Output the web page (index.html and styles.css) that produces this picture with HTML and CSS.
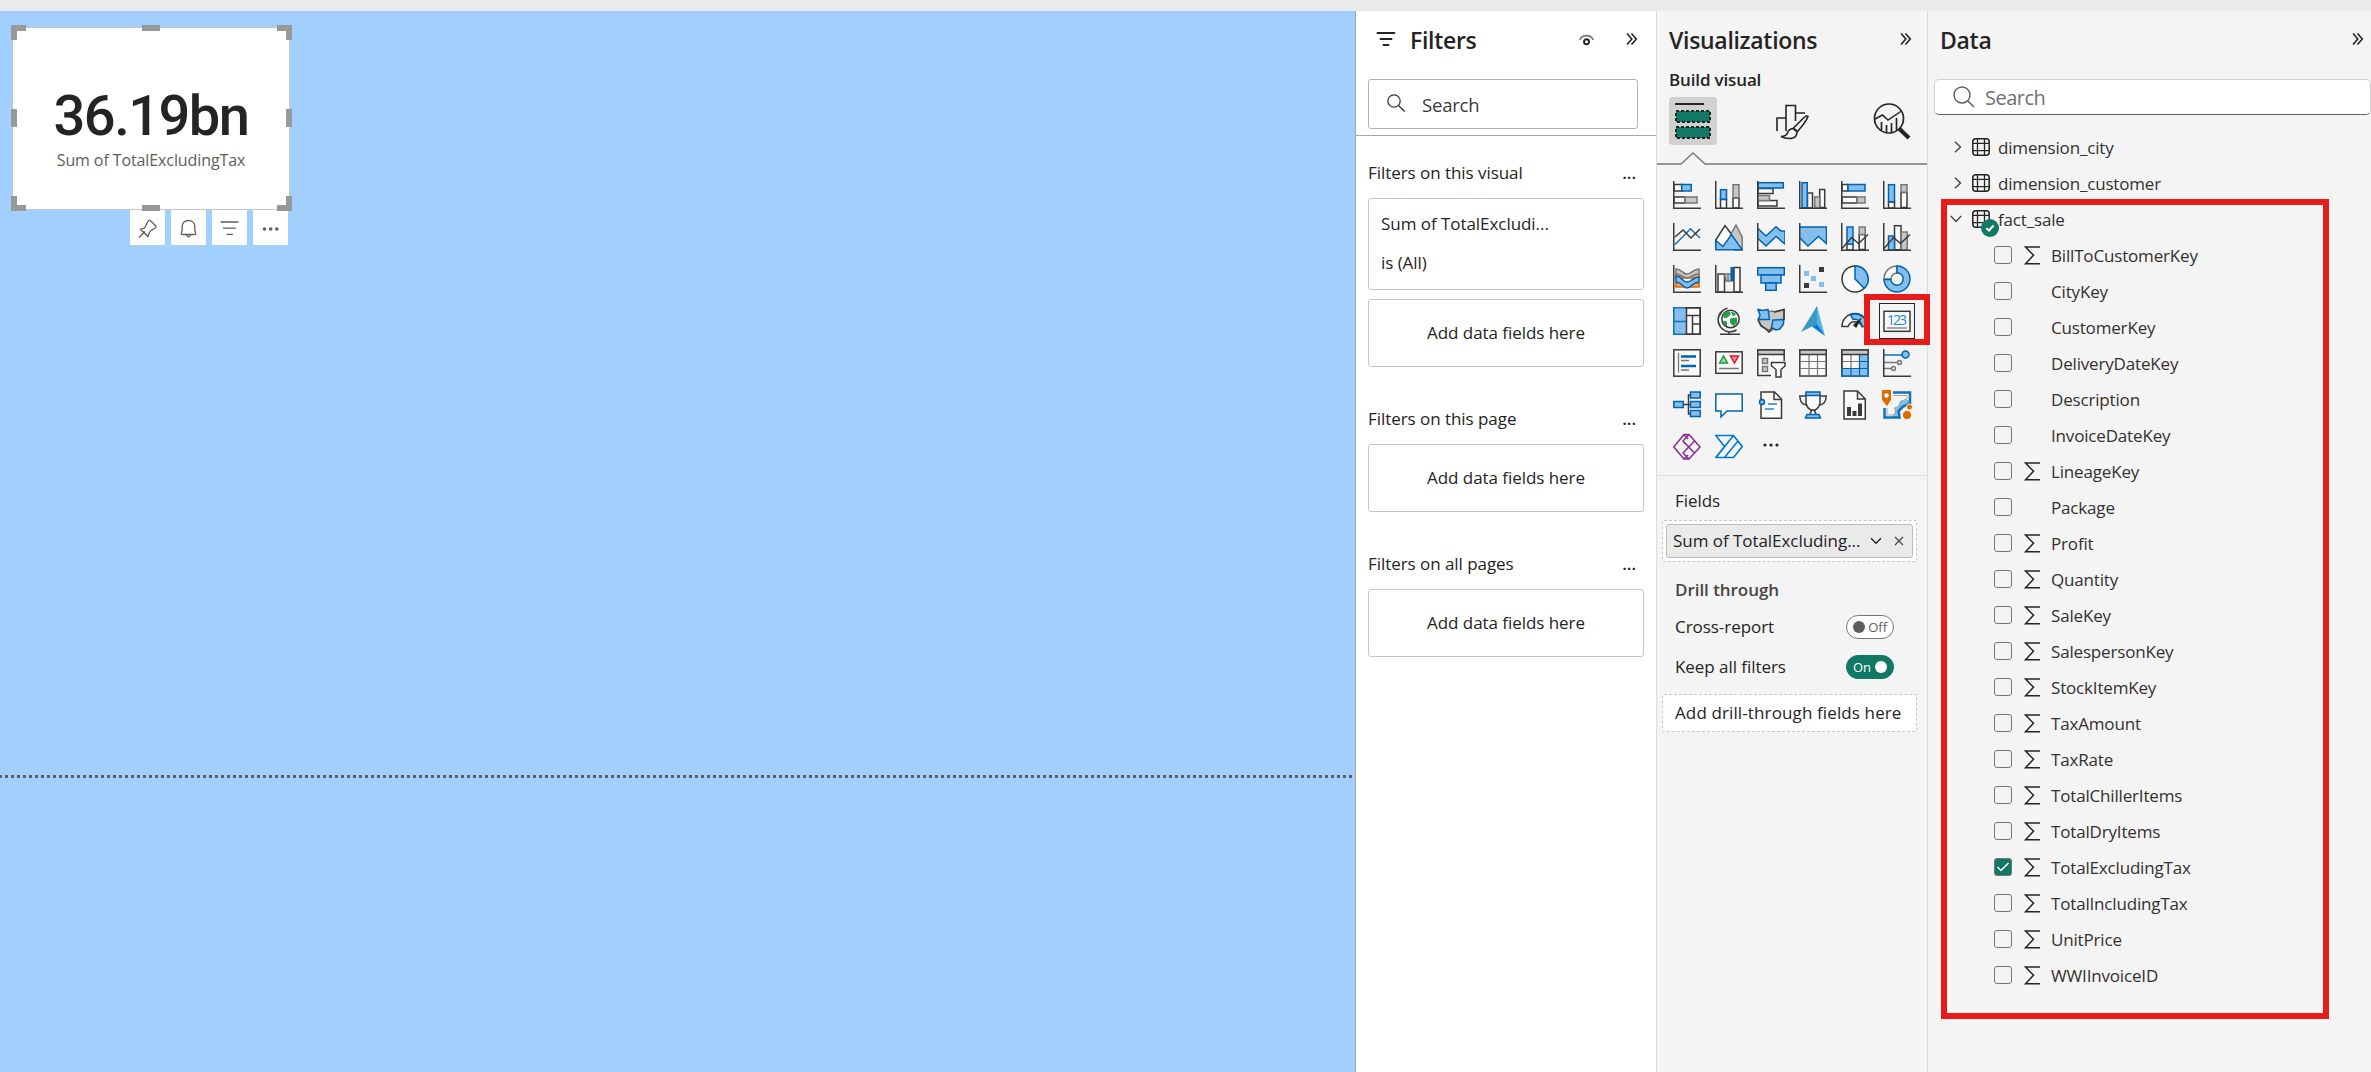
FILE: index.html
```html
<!DOCTYPE html>
<html lang="en">
<head>
<meta charset="utf-8">
<title>Report editor</title>
<link rel="stylesheet" href="styles.css">
</head>
<body>
<svg width="0" height="0" class="defs">
  <symbol id="sigma" viewBox="0 0 17 19"><path d="M16 1H1.5L9.5 9.2 1.5 17.8H16" fill="none" stroke="#252423" stroke-width="1.5"/></symbol>
  <symbol id="table" viewBox="0 0 18 18"><rect x=".8" y=".8" width="16.4" height="16.4" rx="3" fill="none" stroke="#252423" stroke-width="1.5"/><path d="M.8 5.3h16.4M.8 12.6h16.4M5.5.8v16.4M12.5.8v16.4" fill="none" stroke="#252423" stroke-width="1.3"/></symbol>
  <symbol id="chevrons" viewBox="0 0 12 14"><path d="M1 1.5 5.8 7 1 12.500M5.500 1.500 10.300 7 5.500 12.500" fill="none" stroke="#252423" stroke-width="1.6"/></symbol>
  <symbol id="axis" viewBox="0 0 28 28"><path d="M.75 0V27.200H28" fill="none" stroke="#3b3a39" stroke-width="1.500"/></symbol>
</svg>
<div class="topbar"></div>
<div class="app">
  <main class="canvas">
    <section class="card">
      <svg class="handles" width="281" height="186" viewBox="0 0 281 186">
        <path d="M0 0H15V6H6V15H0ZM281 0H266V6H275V15H281ZM0 186H15V180H6V171H0ZM281 186H266V180H275V171H281ZM131 0h18v6h-18ZM131 180h18v6h-18ZM0 84h6v18H0ZM275 84h6v18h-6Z"/>
      </svg>
      <div class="card-value">36.19bn</div>
      <div class="card-label">Sum of TotalExcludingTax</div>
    </section>
    <div class="card-tools">
      <span><svg width="35" height="35" viewBox="0 0 35 35"><path d="M9 27.500 15 21.500M18.500 10.500 14.500 18 10.500 19.300 18 26.500 19.500 22.500Q20.500 20 23 19.500L25.500 17.700Q26.500 16.700 25.500 15.700L20.500 10.700Q19.500 9.800 18.500 10.500Z"/></svg></span>
      <span><svg width="35" height="35" viewBox="0 0 35 35"><path d="M10.500 22.500Q9.500 24.500 11.500 24.500H23.500Q25.500 24.500 24.500 22.500L23.800 20.500V16.500C23.800 8.500 11.200 8.500 11.200 16.500V20.500ZM15 24.500Q17.500 29 20 24.500"/></svg></span>
      <span><svg width="35" height="35" viewBox="0 0 35 35"><path d="M9 12H26M11.500 18.200H23.500M15 24.300H20.500" stroke-linecap="round"/></svg></span>
      <span><svg width="35" height="35" viewBox="0 0 35 35"><g fill="#605e5c" stroke="none"><circle cx="11.500" cy="19" r="1.800"/><circle cx="17.700" cy="19" r="1.800"/><circle cx="23.800" cy="19" r="1.800"/></g></svg></span>
    </div>
    <div class="page-break"></div>
  </main>

  <aside class="filters">
    <header class="filters-head">
      <svg width="20" height="16" viewBox="0 0 20 16"><path d="M1.500 2H18.300M4.500 8H15.500M7.500 14H12.500" stroke="#252423" stroke-width="2" stroke-linecap="round"/></svg>
      <h2>Filters</h2>
      <svg class="eye" width="15" height="12" viewBox="0 0 15 12"><path d="M.8 6C3 .2 12 .2 14.200 6" fill="none" stroke="#797775" stroke-width="1.600"/><circle cx="7.500" cy="7.700" r="2.500" fill="none" stroke="#252423" stroke-width="1.900"/></svg>
      <svg width="12" height="14"><use href="#chevrons"/></svg>
    </header>
    <div class="filters-search">
      <svg width="20" height="20" viewBox="0 0 20 20"><circle cx="8" cy="8" r="6.200" fill="none" stroke="#3b3a39" stroke-width="1.300"/><path d="M12.500 12.500 18.700 18.500" stroke="#3b3a39" stroke-width="1.500"/></svg>
      <span>Search</span>
    </div>
    <section class="filter-group">
      <h3><span>Filters on this visual</span><b>...</b></h3>
      <div class="filter-item"><span>Sum of TotalExcludi...</span><span>is (All)</span></div>
      <div class="drop">Add data fields here</div>
    </section>
    <section class="filter-group">
      <h3><span>Filters on this page</span><b>...</b></h3>
      <div class="drop">Add data fields here</div>
    </section>
    <section class="filter-group">
      <h3><span>Filters on all pages</span><b>...</b></h3>
      <div class="drop">Add data fields here</div>
    </section>
  </aside>

  <aside class="viz">
    <header class="pane-head"><h2 class="viz-title">Visualizations</h2><svg width="12" height="14"><use href="#chevrons"/></svg></header>
    <div class="build">Build visual</div>
    <div class="tabs">
      <span class="tab tab-on"><svg width="48" height="48" viewBox="0 0 48 48"><path d="M6 7H35" stroke="#252423" stroke-width="2"/><g fill="#117865" stroke="#252423" stroke-width="2" stroke-dasharray="3 2"><rect x="7" y="14" width="34" height="11"/><rect x="7" y="30" width="34" height="11"/></g></svg></span>
      <span class="tab"><svg width="48" height="48" viewBox="0 0 48 48" fill="none" stroke="#252423" stroke-width="1.600"><path d="M12 34V21H21M21 34V8.500H30.500V24M30.500 16H40M21 21V28"/><path d="M43 19.500Q42 18 39 20.500L28 31.500Q31 32 32 35Q41 25 43 19.500ZM28 31.500Q23.500 32 22.500 36Q21 39.500 16 39.500Q22 42.500 28 41Q32 39.500 32 35Z" fill="#f4f4f4"/></svg></span>
      <span class="tab"><svg width="48" height="48" viewBox="0 0 48 48" fill="none" stroke="#252423"><circle cx="21" cy="21.500" r="14.500" stroke-width="1.700"/><path d="M7 22 14.500 18 20 23 33.500 14" stroke-width="1.500"/><path d="M13.500 33V25M18.500 36V28M23.500 36V26M28.500 33V21" stroke-width="1.700"/><path d="M31 31.500 41 41" stroke-width="4"/></svg></span>
    </div>
    <svg class="tab-line" width="270" height="14" viewBox="0 0 270 14"><path d="M0 12H24L36 1 48 12H270" fill="none" stroke="#797775" stroke-width="1.400"/></svg>

    <div class="visuals">
      <svg viewBox="0 0 28 28"><g class="w"><rect x="1" y="3.500" width="8" height="6.500"/><rect x="1" y="16" width="11" height="6"/></g><rect class="b" x="8.700" y="3.500" width="9.500" height="6.500"/><rect class="g" x="12" y="16" width="12" height="6"/><use href="#axis"/></svg>
      <svg viewBox="0 0 28 28"><g class="w"><rect x="5.500" y="18.500" width="6" height="9"/><rect x="18" y="17" width="6" height="10"/></g><rect class="b" x="5.500" y="8.700" width="6" height="9.500"/><rect class="g" x="18" y="3.700" width="6" height="13"/><use href="#axis"/></svg>
      <svg viewBox="0 0 28 28"><g class="w"><rect x="1" y="7.500" width="15" height="5"/><rect x="1" y="19.500" width="19" height="5.500"/></g><rect class="b" x="1" y="1.700" width="25.300" height="5.300"/><rect class="g" x="1" y="14.500" width="11.500" height="5"/><use href="#axis"/></svg>
      <svg viewBox="0 0 28 28"><g class="w"><rect x="8.500" y="12" width="5" height="15"/><rect x="20.700" y="8.500" width="5" height="18"/></g><rect class="b" x="3" y="1.700" width="5.200" height="25"/><rect class="g" x="15.700" y="16" width="5" height="11"/><use href="#axis"/></svg>
      <svg viewBox="0 0 28 28"><g class="w"><rect x="1" y="3.500" width="6" height="6.500"/><rect x="1" y="16" width="15" height="6"/></g><rect class="b" x="7" y="3.500" width="17" height="6.500"/><rect class="g" x="16" y="16" width="8" height="6"/><use href="#axis"/></svg>
      <svg viewBox="0 0 28 28"><g class="w"><rect x="5.500" y="21" width="6" height="6"/><rect x="18" y="11.500" width="6" height="15"/></g><rect class="b" x="5.500" y="3.700" width="6" height="17"/><rect class="g" x="18" y="3.700" width="6" height="7.500"/><use href="#axis"/></svg>

      <svg viewBox="0 0 28 28"><path class="lb" d="M2 21.500 10 13.500 17.500 5.800 27 15"/><path class="ld" d="M2 14 10 7 18 15 27 6"/><use href="#axis"/></svg>
      <svg viewBox="0 0 28 28"><path class="w" d="M.8 17 10 2.500 17 12 14 24H.8Z"/><path class="g" d="M15.500 12 21 2 27.200 14V27H20Z"/><path class="b" d="M.8 17.500 8 23.500 16.500 11.500 27.200 26.800H.8Z"/></svg>
      <svg viewBox="0 0 28 28"><path class="b" d="M1 5.500 9 13 19 3.700 24 8H28V21L19 13.500 9 23 1 15.500"/><use href="#axis"/></svg>
      <svg viewBox="0 0 28 28"><path class="b" d="M1 4H27.500V20.500L19.500 13.500 9 23 1 15"/><use href="#axis"/></svg>
      <svg viewBox="0 0 28 28"><g class="w"><rect x="6" y="21" width="6" height="6"/><rect x="18.200" y="11.500" width="6" height="15"/></g><rect class="b" x="6" y="4" width="6" height="17"/><rect class="g" x="18.200" y="4" width="6" height="7.500"/><path class="ld" d="M1 25.500 10.500 14.500 17.500 20.500 27 11.500"/><use href="#axis"/></svg>
      <svg viewBox="0 0 28 28"><rect class="w" x="11.500" y="2.700" width="6.500" height="24"/><rect class="b" x="5.500" y="13" width="6" height="14"/><rect class="g" x="18.200" y="9" width="6" height="18"/><path class="ld" d="M1 25.500 10.500 14.500 17.500 20.500 27 11.500"/><use href="#axis"/></svg>

      <svg viewBox="0 0 28 28"><path d="M3 9H8L13 13 19 9H26V13H3ZM3 18H8L13 22 19 18H26V22H3Z" fill="#f2a65a" stroke="#dd6b00" stroke-width="1.600"/><path class="g" d="M3 4C9 4 9 9 14 9S20 4 26 4V9C20 9 18 13 14 13S8 9 3 9Z"/><path class="b" d="M3 11C9 11 9 17 14 17S20 12 26 12V17C20 17 18 23 14 23S9 17 3 17Z"/><use href="#axis"/></svg>
      <svg viewBox="0 0 28 28"><g class="w"><rect x="3" y="9" width="6.500" height="18"/><rect x="19" y="2.500" width="6" height="24.500"/></g><path class="g" d="M9.500 9H14V16H11Z"/><rect x="13" y="9" width="5" height="7" fill="#c8c6c4" stroke="#797775" stroke-width="1.300"/><rect x="15.500" y="2" width="3.500" height="14" fill="#0063b1"/><use href="#axis"/></svg>
      <svg viewBox="0 0 28 28"><g class="b"><rect x=".8" y="2.700" width="26.500" height="7.300"/><rect x="4" y="10" width="20" height="8"/><rect x="8.700" y="18" width="10.500" height="7.300"/></g></svg>
      <svg viewBox="0 0 28 28"><g fill="#83beec"><rect x="5" y="6" width="5" height="5"/><rect x="12" y="11" width="5" height="5"/><rect x="20" y="17" width="5" height="5"/></g><path d="M20 2h5v5h-5ZM5 18h5v5H5Z" fill="#3b3a39"/><use href="#axis"/></svg>
      <svg viewBox="0 0 28 28"><circle class="w" cx="14" cy="14" r="13"/><path class="b" d="M14 1A13 13 0 0 1 23.200 23.200L14 14Z"/></svg>
      <svg viewBox="0 0 28 28"><path class="g2 hollow" d="M14 1A13 13 0 0 0 1 14H8A6 6 0 0 1 14 8Z"/><path class="b" d="M14 1A13 13 0 1 1 1 14.500H7.800A6.200 6.200 0 1 0 14 7.800Z"/></svg>

      <svg viewBox="0 0 28 28"><rect class="w" x=".8" y=".8" width="26.400" height="26.400"/><rect x=".8" y=".8" width="12.500" height="26.400" fill="#83beec"/><path d="M13 .8H.8V27.200H13M.8 14.500H13" class="lb"/><path class="ld" d="M13.500 0V28M13.500 8.500H27M19.500 8.500V27M19.500 17H27M12 .8H27.200V27.200H12"/></svg>
      <svg viewBox="-1.500 0 28 28"><path class="ld" d="M5 4.500A12 12 0 0 0 20 23M11 1.200A10 10 0 0 0 3.500 8M12.500 24V27M3.500 27.200H23.500"/><circle cx="14" cy="12" r="8.700" fill="#fafafa" stroke="#3b3a39" stroke-width="1.500"/><path d="M8 6 12 4 14 7 11 10 8 11 7 8ZM15 5 19 7 17 9ZM14 12 20 11 20 16 17 18.500 14 16ZM7 14 10 15 10 19 8 17Z" fill="#259a47" stroke="#259a47"/></svg>
      <svg viewBox="0 0 28 28"><path class="g2" d="M11 5 15 4 18 5 27 2.500V13L25 16 18 21 14 24 9 22 4 18 1 12 10 12Z"/><path class="b" d="M1 2.500 6 3.500 11 2.500 12.500 12.500H1.500L3 8ZM16 13 26.500 12.500V17L23 22 19 23 14.500 20.500Z"/><path class="ld" d="M1 13 4 19 9 22 12 25 14.500 21M17 5 27 2.500V13"/></svg>
      <svg viewBox="0 0 28 28" class="over"><path d="M18-1 2 25 18 17Z" fill="#3999c6"/><path d="M18-1 26 29 18 18Z" fill="#59b4d9"/><path d="M13 19.500 18 17 26 29Z" fill="#0078d4"/></svg>
      <svg viewBox="0 0 28 28"><path class="w" d="M1 19.500A13 13 0 0 1 27 19.500H21A7.500 7.500 0 0 0 7 19.500Z"/><path class="b" d="M9.500 8A13 13 0 0 1 27 19.500H21A7.500 7.500 0 0 0 12 12.500Z"/><path d="M20 11.500 12.500 18 15 20.500Z" fill="#252423" stroke="#252423"/></svg>
      <span class="picked"><svg viewBox="0 0 28 28"><rect class="w" x="1" y="4.300" width="26" height="20" stroke-width="2"/><text x="14" y="18.300" text-anchor="middle" textLength="20" class="n123">123</text><path d="M4 21H24" stroke="#797775" stroke-width="1.300"/></svg></span>

      <svg viewBox="0 0 28 28"><rect class="w" x=".8" y=".8" width="26.400" height="26.400"/><path d="M5.500 4V23.500M8 11.500H16M8 21H16" stroke="#797775" stroke-width="1.300"/><path d="M8 7.500H23M8 17H23" stroke="#0063b1" stroke-width="2.400"/></svg>
      <svg viewBox="0 0 28 28"><rect class="w" x=".8" y="2.800" width="26.400" height="21.500"/><path d="M4.500 14 8.500 7 12.500 14Z" fill="#9fd89f" stroke="#259a47" stroke-width="1.500"/><path d="M15.500 7H23.500L19.500 14Z" fill="#f59a9a" stroke="#e81123" stroke-width="1.500"/><path d="M4 19.500H24" stroke="#797775" stroke-width="1.500"/></svg>
      <svg viewBox="0 0 28 28" class="over"><path class="w" d="M14 26.500H.8V1H27.200V12"/><rect class="hd" x=".8" y="1" width="26.400" height="4.500"/><path class="g" d="M5.500 9.500h5v5h-5ZM5.500 17.500h5v5h-5Z"/><path class="w" d="M14.500 13.500H28V17L24 20.500V28H19V20.500L14.500 17Z"/></svg>
      <svg viewBox="0 0 28 28"><rect class="w" x=".8" y="1" width="26.400" height="26"/><path d="M10 6V26M18.500 6V26M1 12.500H27M1 19.500H27" stroke="#797775" stroke-width="1.200"/><rect class="hd" x=".8" y="1" width="26.400" height="4.500"/></svg>
      <svg viewBox="0 0 28 28"><rect class="w" x=".8" y="1" width="26.400" height="26"/><path d="M18 6H27V27H1V19.500H18Z" fill="#83beec"/><path d="M10 6V19M1 12.500H18" stroke="#797775" stroke-width="1.200"/><path d="M18.500 6V27M1 19.500H27M10 19.500V27M18.500 12.500H27" stroke="#0063b1" stroke-width="1.200"/><path class="ld" d="M.8 1V27.200H27.200V1"/><path class="lb" d="M1 19V27.200H27.200V6"/><rect class="hd" x=".8" y="1" width="26.400" height="4.500"/></svg>
      <svg viewBox="0 0 28 28"><path class="lb" d="M1 6H19"/><circle class="b" cx="22.500" cy="5.500" r="3.500"/><path class="lg" d="M1 13.500H14.500M1 19.500H8"/><circle class="lg" cx="16.500" cy="13.500" r="1.900"/><circle class="lg" cx="10.500" cy="19.500" r="1.900"/><use href="#axis"/></svg>

      <svg viewBox="0 0 28 28"><path class="ld" d="M10 13.500H17M20 4H15.500V23H20M15.500 13.500H18"/><g class="b"><rect x=".8" y="10.500" width="9.500" height="6"/><rect x="17.500" y="1" width="9.700" height="6"/><rect x="17.500" y="10.500" width="9.700" height="6"/><rect x="17.500" y="19.500" width="9.700" height="6"/></g></svg>
      <svg viewBox="0 0 28 28"><path d="M.8 3H27.200V20H12L6 26V20H.8Z" fill="#fafafa" stroke="#0063b1" stroke-width="1.500"/></svg>
      <svg viewBox="0 0 28 28"><path class="w" d="M4 9V1H17.500L24.500 8V27.200H4V14"/><path class="ld" d="M17 1V8.500H24.500"/><circle class="b" cx="5" cy="11" r="2.500"/><path d="M11 13H20M8 18H17" stroke="#1e88cf" stroke-width="1.500"/></svg>
      <svg viewBox="0 0 28 28"><path class="ld" d="M7 5H.8C1 11 3 14 8 14M21 5H27.200C27 11 25 14 20 14M13 18.500 11 23M15 18.500 17 23"/><path class="w" d="M7 4V12Q8 17 12 19H16Q20 17 21 12V4Z"/><path class="b" d="M7 1H21V4.500H7ZM6.500 27 8 23.500H20L21.500 27Z"/></svg>
      <svg viewBox="0 0 28 28" class="over"><path class="w" d="M3 0V28H24.300V8L16.500 0Z"/><path class="ld" d="M16.500 0V8H24"/><path d="M6 16h4v9H6ZM11.500 20h4v5h-4ZM17 12.500h4V25h-4Z" fill="#3b3a39"/></svg>
      <svg viewBox="0 0 28 28" class="over"><path d="M22 9H26V13L20 17 16 22 14 26H9L12 21 11 17 15 15 17 10Z" fill="#83beec"/><path class="lb map" d="M10 1.500H27V12.500L20 15.500 15.500 20 16.500 26.500H1.500V17"/><path d="M11 4.500H24V8L18 10 17 15 12 17 13 22 10 24H4V17" fill="none" stroke="#a9a7a5"/><path d="M-1-1H8V9L4 15-1 9Z" fill="#dd6b00"/><circle cx="3.500" cy="4.500" r="2.200" fill="#fff"/><circle cx="24" cy="24" r="4.600" fill="#dd6b00" stroke="#f4f4f4"/><circle cx="26.500" cy="16" r="3" fill="#dd6b00" stroke="#f4f4f4"/></svg>

      <svg viewBox="0 0 28 28"><g fill="none" stroke="#8c2a94" stroke-width="1.500" stroke-linejoin="round"><path d="M11 1.500H16L27 14 16 26H11L.8 14Z"/><path d="M16 1.500 10 8 21.500 20M21.500 8 10 20 16 26M11 1.500 15 6M10 8Q12 11 13 11M11 26 15 22"/></g></svg>
      <svg viewBox="0 0 28 28"><path d="M.8 2.500H18.500L27.300 13.500 18.500 24.500H.8L9.500 13.500ZM18.500 2.500 1 24.500M23 8 9.500 24.500M9.500 13.500 .8 2.500" fill="none" stroke="#0078d4" stroke-width="1.600" stroke-linejoin="round"/></svg>
      <svg viewBox="0 0 28 28"><g fill="#252423"><circle cx="8" cy="12" r="1.600"/><circle cx="14" cy="12" r="1.600"/><circle cx="20" cy="12" r="1.600"/></g></svg>
      <div class="mark mark-small"></div>
    </div>

    <section class="wells">
      <div class="well-title">Fields</div>
      <div class="well"><div class="chip"><span>Sum of TotalExcluding...</span>
        <svg width="12" height="8" viewBox="0 0 12 8"><path d="M1 1.200 6 6.200 11 1.200" fill="none" stroke="#252423" stroke-width="1.400"/></svg>
        <svg width="10" height="10" viewBox="0 0 10 10"><path d="M1 1 9 9M9 1 1 9" stroke="#484644" stroke-width="1.200"/></svg></div></div>
      <div class="drill">Drill through</div>
      <div class="option"><span>Cross-report</span><span class="toggle"><i></i>Off</span></div>
      <div class="option"><span>Keep all filters</span><span class="toggle toggle-on">On<i></i></span></div>
      <div class="well-empty">Add drill-through fields here</div>
    </section>
  </aside>

  <aside class="data">
    <header class="pane-head"><h2 class="data-title">Data</h2><svg width="12" height="14"><use href="#chevrons"/></svg></header>
    <div class="data-search"><svg width="22" height="22" viewBox="0 0 22 22"><circle cx="9" cy="9" r="8" fill="none" stroke="#605e5c" stroke-width="1.400"/><path d="M14.500 14.500 21 21" stroke="#605e5c" stroke-width="1.500"/></svg><span>Search</span></div>
    <div class="tree">
      <div class="tbl"><svg width="8" height="12" viewBox="0 0 8 12"><path d="M1 .8 6.500 6 1 11.200"/></svg><svg class="t" width="18" height="18"><use href="#table"/></svg><span>dimension_city</span></div>
      <div class="tbl"><svg width="8" height="12" viewBox="0 0 8 12"><path d="M1 .8 6.500 6 1 11.200"/></svg><svg class="t" width="18" height="18"><use href="#table"/></svg><span>dimension_customer</span></div>
      <div class="tbl tbl-open"><svg width="12" height="8" viewBox="0 0 12 8"><path d="M.8 1 6 6.500 11.200 1"/></svg><svg class="t" width="18" height="18"><use href="#table"/></svg><span>fact_sale</span>
        <svg class="badge" width="18" height="18" viewBox="0 0 18 18"><circle cx="9" cy="9" r="9" fill="#117865"/><path d="M5.300 9.300 8 11.500 12.500 6.500" fill="none" stroke="#fff" stroke-width="2"/></svg></div>
      <div class="field"><i></i><svg><use href="#sigma"/></svg><span>BillToCustomerKey</span></div>
      <div class="field"><i></i><svg></svg><span>CityKey</span></div>
      <div class="field"><i></i><svg></svg><span>CustomerKey</span></div>
      <div class="field"><i></i><svg></svg><span>DeliveryDateKey</span></div>
      <div class="field"><i></i><svg></svg><span>Description</span></div>
      <div class="field"><i></i><svg></svg><span>InvoiceDateKey</span></div>
      <div class="field"><i></i><svg><use href="#sigma"/></svg><span>LineageKey</span></div>
      <div class="field"><i></i><svg></svg><span>Package</span></div>
      <div class="field"><i></i><svg><use href="#sigma"/></svg><span>Profit</span></div>
      <div class="field"><i></i><svg><use href="#sigma"/></svg><span>Quantity</span></div>
      <div class="field"><i></i><svg><use href="#sigma"/></svg><span>SaleKey</span></div>
      <div class="field"><i></i><svg><use href="#sigma"/></svg><span>SalespersonKey</span></div>
      <div class="field"><i></i><svg><use href="#sigma"/></svg><span>StockItemKey</span></div>
      <div class="field"><i></i><svg><use href="#sigma"/></svg><span>TaxAmount</span></div>
      <div class="field"><i></i><svg><use href="#sigma"/></svg><span>TaxRate</span></div>
      <div class="field"><i></i><svg><use href="#sigma"/></svg><span>TotalChillerItems</span></div>
      <div class="field"><i></i><svg><use href="#sigma"/></svg><span>TotalDryItems</span></div>
      <div class="field"><i class="on"><svg class="tick" viewBox="0 0 16 16"><path d="M2.500 8 6 11.500 13.500 4" fill="none" stroke="#fff" stroke-width="1.500"/></svg></i><svg><use href="#sigma"/></svg><span>TotalExcludingTax</span></div>
      <div class="field"><i></i><svg><use href="#sigma"/></svg><span>TotalIncludingTax</span></div>
      <div class="field"><i></i><svg><use href="#sigma"/></svg><span>UnitPrice</span></div>
      <div class="field"><i></i><svg><use href="#sigma"/></svg><span>WWIInvoiceID</span></div>
      <div class="mark mark-tree"></div>
    </div>
  </aside>
</div>
</body>
</html>
```
FILE: styles.css
```css
* { box-sizing: border-box; }
body {
  margin: 0;
  height: 1072px;
  overflow: hidden;
  display: flex;
  flex-direction: column;
  font-family: "Open Sans", "Noto Sans", sans-serif;
  font-size: 17px;
  letter-spacing: -0.05px;
  color: #252423;
  white-space: nowrap;
}
svg { display: block; flex: none; }
.defs { position: absolute; }
h2, h3 { margin: 0; }
h2 { font-size: 23px; font-weight: 600; line-height: 32px; letter-spacing: -0.3px; padding-top: 2px; }

.topbar { height: 11px; background: #eaeaea; }
.app { flex: 1; display: grid; grid-template-columns: 1355px 301px 271px 444px; }

/* report canvas */
.canvas { background: #a1d0ff; padding: 16px 0 0 12px; }
.card {
  position: relative;
  width: 278px;
  height: 183px;
  background: #fff;
  border: 1px solid #c8c6c4;
  text-align: center;
  padding-top: 52px;
}
.handles { position: absolute; left: -2px; top: -3px; fill: #999; }
.card-value { font: 500 56px/72px Roboto, sans-serif; letter-spacing: -1.5px; }
.card-label { font-size: 16px; line-height: 22px; margin-top: -3px; color: #605e5c; letter-spacing: -0.1px; }
.card-tools { display: flex; gap: 6px; margin-left: 118px; }
.card-tools span { background: #fff; width: 35px; height: 35px; }
.card-tools svg { fill: none; stroke: #605e5c; stroke-width: 1.3; }
.page-break {
  height: 3px;
  width: 1353px;
  margin: 530px 0 0 -12px;
  background: repeating-linear-gradient(90deg, #605e5c 0 2px, transparent 2px 5px, #605e5c 5px 6px);
}

/* filters pane */
.filters { background: #fff; border-left: 1px solid #a6a6a6; }
.filters-head { display: flex; align-items: center; height: 68px; padding: 0 18px 12px 20px; }
.filters-head h2 { margin-left: 14px; }
.filters-head .eye { margin: 2px 32px 0 auto; }
.filters-search {
  display: flex;
  align-items: center;
  width: 270px;
  height: 50px;
  margin-left: 12px;
  padding-left: 17px;
  gap: 16px;
  border: 1px solid #b3b0ad;
  border-radius: 3px;
  font-size: 18.5px;
  letter-spacing: -0.2px;
  color: #3b3a39;
}
.filters-search svg { margin-top: -2px; }
.filters-search + .filter-group { border-top: 1px solid #a6a6a6; margin-top: 6px; padding-top: 24px; }
.filter-group { padding: 39px 12px 0; }
.filter-group h3 { display: flex; justify-content: space-between; font-size: 17px; font-weight: 400; line-height: 26px; margin-bottom: 12px; }
.filter-group b { font-weight: 600; margin-right: 8px; }
.filter-item, .drop { border: 1px solid #c8c6c4; border-radius: 3px; }
.filter-item { height: 92px; padding: 5px 12px; margin-bottom: 9px; display: flex; flex-direction: column; line-height: 39px; }
.drop { height: 68px; line-height: 66px; text-align: center; }
.filter-group .drop, .filter-item { width: 276px; }

/* visualizations pane */
.viz, .data { background: #f4f4f4; border-left: 1px solid #dcdcdc; }
.pane-head { display: flex; align-items: center; justify-content: space-between; height: 56px; padding: 0 15px 0 12px; }
.build { font-weight: 600; line-height: 26px; padding-left: 12px; letter-spacing: -0.15px; }
.tabs { display: flex; gap: 48px; padding: 4px 0 0 12px; }
.tab { width: 48px; height: 48px; border-radius: 4px; }
.tab:last-child { margin-left: 7px; }
.tab-on { background: #d2d0ce; }
.tab-line { margin-top: 7px; }
.visuals { position: relative; display: grid; grid-template-columns: repeat(6, 28px); gap: 14px; margin-top: 15px; padding: 0 0 14px 16px; height: 295px; border-bottom: 1px solid #dcdcdc; }
.visuals svg { width: 28px; height: 28px; }
.visuals .over { overflow: visible; }
.w, .b, .g, .g2, .ld, .lb, .lg { stroke-width: 1.5; }
.w { fill: #fafafa; stroke: #3b3a39; }
.b { fill: #83beec; stroke: #0063b1; }
.g, .g2 { fill: #c8c6c4; stroke: #797775; }
.hollow { fill: #fafafa; }
.ld { fill: none; stroke: #3b3a39; }
.lb { fill: none; stroke: #1071bc; }
.map { stroke-width: 2.5; }
.lg { fill: none; stroke: #797775; }
.hd { fill: #c8c6c4; stroke: #3b3a39; stroke-width: 1.5; }
.n123 { font: 14px "Open Sans", sans-serif; fill: #1e88cf; letter-spacing: 0; }
.picked { width: 36px; height: 36px; margin: -4px; padding: 3px; border: 1px solid #252423; }
.mark { position: absolute; border: 6px solid #e81b1b; }
.mark-small { left: 207px; top: 113px; width: 66px; height: 51px; z-index: 1; }

.wells { padding: 12px 9px 0 5px; }
.well-title { padding-left: 13px; line-height: 26px; }
.well, .well-empty { background: #fff; border: 1px dashed #c8c6c4; border-radius: 2px; width: 255px; }
.well { margin-top: 6px; height: 42px; padding: 3px; }
.chip { display: flex; align-items: center; height: 34px; width: 247px; background: #eaeaea; border: 1px solid #bebbb8; border-radius: 3px; padding: 0 8px 0 6px; }
.chip span { width: 197px; padding-bottom: 1px; }
.chip svg + svg { margin-left: auto; }
.drill { font-weight: 600; color: #484644; line-height: 26px; padding-left: 13px; margin-top: 15px; }
.option { display: flex; justify-content: space-between; align-items: center; height: 40px; padding: 0 24px 0 13px; }
.option > span:first-child { padding-bottom: 2px; }
.drill + .option { margin-top: 4px; }
.toggle { display: flex; align-items: center; justify-content: space-between; width: 48px; height: 24px; border: 1px solid #797775; border-radius: 12px; background: #fff; padding: 0 6px; font-size: 13px; color: #605e5c; }
.toggle i { width: 12px; height: 12px; border-radius: 50%; background: #605e5c; }
.toggle-on { background: #117865; border-color: #117865; color: #fff; }
.toggle-on i { background: #fff; }
.well-empty { height: 38px; line-height: 36px; padding-left: 12px; margin-top: 7px; letter-spacing: 0.12px; }

/* data pane */
.pane-head + .data-search { margin-top: 12px; }
.data .pane-head { padding-right: 7px; }
.data-search { display: flex; align-items: center; gap: 10px; height: 36px; margin-left: 6px; padding-left: 18px; background: #fff; border: 1px solid #d1d1d1; border-bottom-color: #616161; border-radius: 5px; font-size: 20px; color: #707070; letter-spacing: -0.5px; }
.tree { position: relative; padding-top: 14px; letter-spacing: -0.17px; }
.tbl, .field { display: flex; align-items: center; height: 36px; color: #323130; }
.tbl { position: relative; padding-left: 26px; }
.tbl svg:first-child { fill: none; stroke: #484644; stroke-width: 1.4; }
.tbl .t { margin: 0 8px 0 10px; }
.tbl-open { padding-left: 22px; }
.tbl .badge { position: absolute; left: 53px; top: 18px; }
.field { padding-left: 66px; }
.field i { width: 18px; height: 18px; border: 1px solid #797775; border-radius: 3px; }
.field .on { background: #117865; }
.field > svg { width: 17px; height: 19px; margin: 0 10px 0 12px; }
.mark-tree { left: 13px; top: 84px; width: 388px; height: 820px; }
```
